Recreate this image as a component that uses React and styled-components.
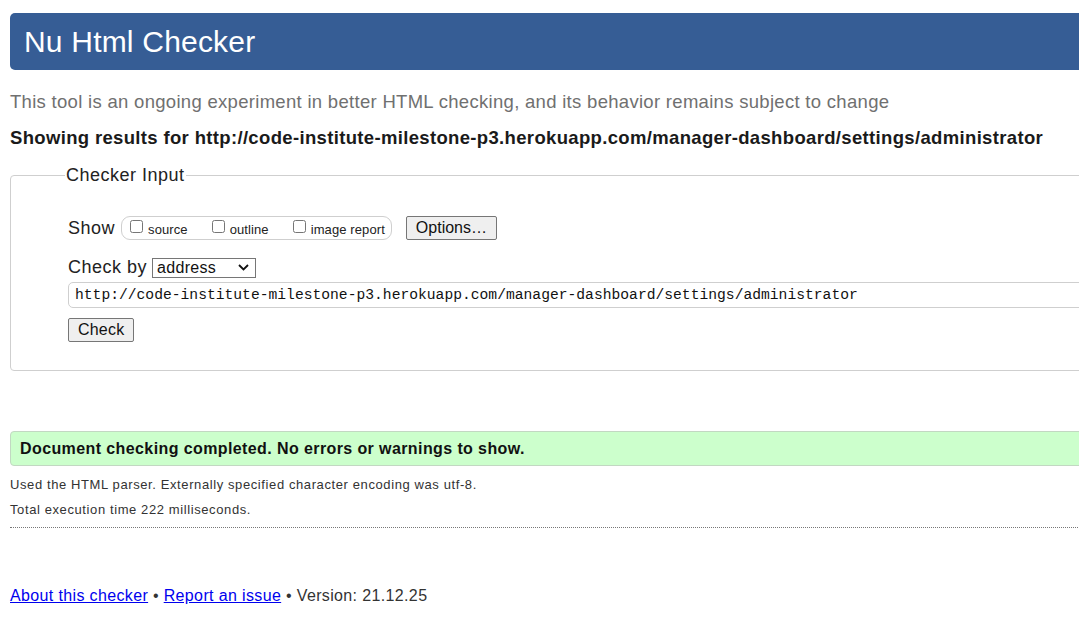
import React from 'react';
import styled, { createGlobalStyle } from 'styled-components';

const GlobalStyle = createGlobalStyle`
    html, body {
        margin:0;
        padding:0;
        overflow:hidden;
        background:#fff;
    }
    body{
        font-family:"Liberation Sans", Arial, sans-serif;
        color:#222;
    }
`;

const Page = styled.div`
    width:1200px;
    padding:13px 0 40px 10px;
`;

const Header = styled.header`
    height:57px;
    background:#365d95;
    border-radius:5px;
    display:flex;
    align-items:center;
    padding-left:14px;

    h1{
        margin:0;
        color:#fff;
        font-weight:normal;
        font-size:30px;
        letter-spacing:0.2px;
        line-height:34px;
    }
`;

const Intro = styled.p`
    margin:21px 0 0;
    font-size:18.5px;
    letter-spacing:0.3px;
    line-height:22px;
    color:#707070;
`;

const ResultsFor = styled.p`
    margin:14px 0 0;
    font-size:18.5px;
    letter-spacing:0.34px;
    line-height:22px;
    font-weight:bold;
    color:#1a1a1a;
`;

const Fieldset = styled.fieldset`
    margin:15px 0 0;
    padding:0 0 28px 57px;
    border:1px solid #cfcfcf;
    border-radius:4px;
    min-width:0;

    legend{
        margin-left:-3px;
        padding:0 1px;
        font-size:18px;
        letter-spacing:0.5px;
        line-height:22px;
        color:#222;
    }
`;

const Row = styled.div`
    display:flex;
    align-items:center;
    margin-top:${p => p.$top}px;
    font-size:18px;
    letter-spacing:0.5px;
    color:#222;
`;

const Pill = styled.div`
    display:flex;
    align-items:center;
    height:22px;
    margin-left:6px;
    padding:0 6px 0 8px;
    border:1px solid #cfcfcf;
    border-radius:9px;
    gap:24px;
    letter-spacing:0.1px;
`;

const CheckLabel = styled.label`
    display:flex;
    align-items:center;
    font-size:13px;
    color:#222;

    input{
        margin:0 5px 0 0;
        width:13px;
        height:13px;
        position:relative;
        top:-2px;
    }
    span{
        position:relative;
        top:1px;
    }
`;

const Button = styled.button`
    font-family:"Liberation Sans", Arial, sans-serif;
    font-size:16px;
    letter-spacing:${p => p.$spacing ?? 0.2}px;
    height:24px;
    padding:0 9px;
    margin-left:${p => p.$left || 0}px;
    background:#efefef;
    border:1px solid #767676;
    border-radius:2px;
    color:#111;
`;

const SelectWrap = styled.div`
    position:relative;
    margin-left:5px;
    display:flex;

    svg{
        position:absolute;
        right:7px;
        top:6px;
        pointer-events:none;
    }
`;

const Select = styled.select`
    appearance:none;
    width:104px;
    height:20px;
    font-family:"Liberation Sans", Arial, sans-serif;
    font-size:16px;
    letter-spacing:0.3px;
    border:1px solid #767676;
    border-radius:0;
    background:#fff;
    color:#111;
    padding:0 0 0 4px;
    line-height:18px;
`;

const UrlInput = styled.input`
    display:block;
    width:100%;
    box-sizing:border-box;
    height:26px;
    margin-top:4px;
    padding:0 6px;
    border:1px solid #cfcfcf;
    border-radius:5px 0 0 5px;
    font-family:"Liberation Mono", "DejaVu Sans Mono", monospace;
    font-size:14.67px;
    color:#111;
    outline:none;
`;

const Success = styled.div`
    margin-top:60px;
    height:35px;
    box-sizing:border-box;
    display:flex;
    align-items:center;
    padding-left:9px;
    background:#ccffcc;
    border:1px solid #c2d8c2;
    border-radius:4px;
    font-size:16px;
    letter-spacing:0.4px;
    font-weight:bold;
    color:#111;
`;

const Note = styled.p`
    margin:${p => p.$top}px 0 0;
    font-size:13px;
    letter-spacing:0.6px;
    line-height:18px;
    color:#333;
`;

const Rule = styled.hr`
    margin:8px 0 0;
    border:none;
    border-top:1px dotted #777;
    height:0;
`;

const Footer = styled.p`
    margin:58px 0 0;
    font-size:16px;
    letter-spacing:0.36px;
    line-height:20px;
    color:#333;

    a{
        color:#0000ee;
        text-decoration:underline;
    }
`;

const App = () => {
    const url = "http://code-institute-milestone-p3.herokuapp.com/manager-dashboard/settings/administrator";

    return (
        <Page>
            <GlobalStyle />
            <Header>
                <h1>Nu Html Checker</h1>
            </Header>
            <Intro>This tool is an ongoing experiment in better HTML checking, and its behavior remains subject to change</Intro>
            <ResultsFor>Showing results for {url}</ResultsFor>

            <Fieldset>
                <legend>Checker Input</legend>
                <Row $top={30}>
                    Show
                    <Pill>
                        <CheckLabel><input type="checkbox" /><span>source</span></CheckLabel>
                        <CheckLabel><input type="checkbox" /><span>outline</span></CheckLabel>
                        <CheckLabel><input type="checkbox" /><span>image report</span></CheckLabel>
                    </Pill>
                    <Button $left={14} $spacing={0}>Options…</Button>
                </Row>
                <Row $top={17}>
                    Check by
                    <SelectWrap>
                        <Select defaultValue="address">
                            <option value="address">address</option>
                            <option value="file">file upload</option>
                            <option value="text">text input</option>
                        </Select>
                        <svg width="11" height="7" viewBox="0 0 11 7">
                            <path d="M1 1l4.5 4.5L10 1" fill="none" stroke="#111" strokeWidth="1.8" />
                        </svg>
                    </SelectWrap>
                </Row>
                <UrlInput type="url" defaultValue={url} />
                <Row $top={10}>
                    <Button>Check</Button>
                </Row>
            </Fieldset>

            <Success>Document checking completed. No errors or warnings to show.</Success>
            <Note $top={10}>Used the HTML parser. Externally specified character encoding was utf-8.</Note>
            <Note $top={7}>Total execution time 222 milliseconds.</Note>
            <Rule />
            <Footer>
                <a href="#about">About this checker</a> • <a href="#issue">Report an issue</a> • Version: 21.12.25
            </Footer>
        </Page>
    );
};

export default App;
